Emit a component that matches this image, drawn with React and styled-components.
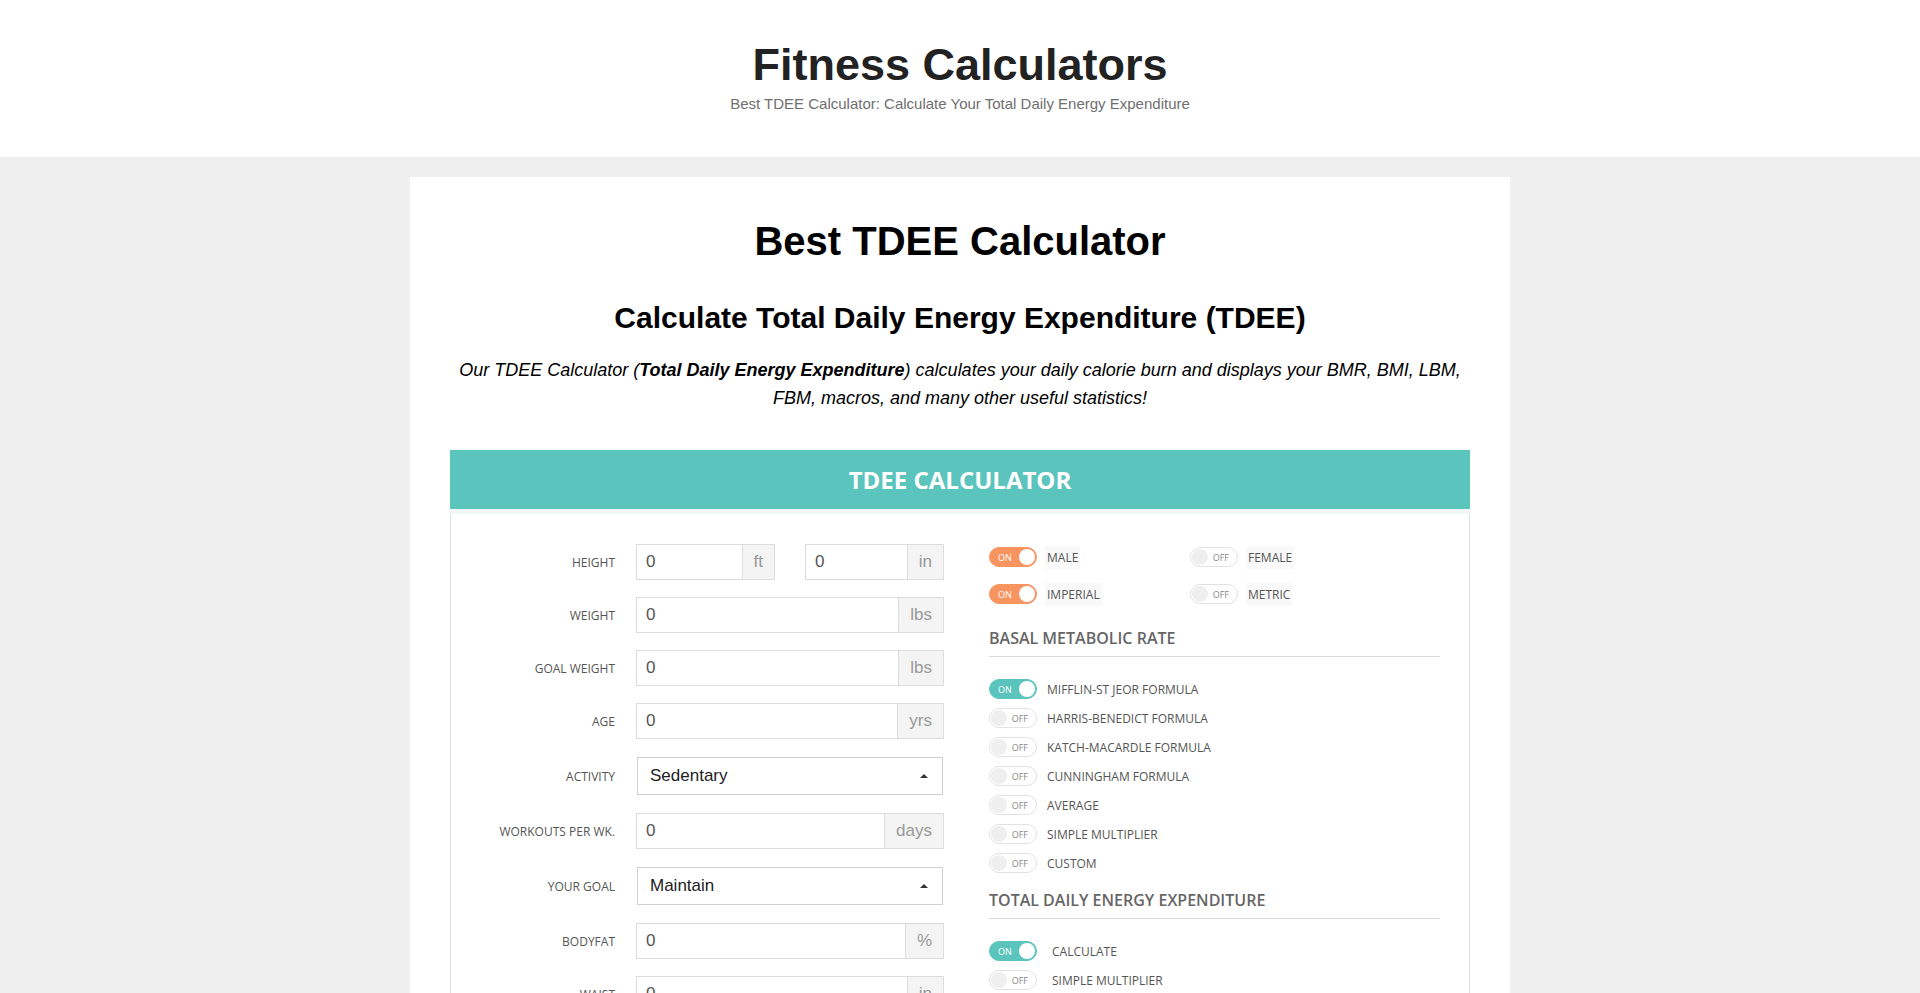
import React from "react"
import styled, { createGlobalStyle } from "styled-components"

const GlobalStyle = createGlobalStyle`
  * { box-sizing: border-box; }
  body {
    margin: 0;
    background: #efefef;
    font-family: "Liberation Sans", Arial, sans-serif;
  }
`

const leftRows = [
  { label: "Height", kind: "split", parts: [{ value: "0", unit: "ft" }, { value: "0", unit: "in" }] },
  { label: "Weight", kind: "input", value: "0", unit: "lbs" },
  { label: "Goal Weight", kind: "input", value: "0", unit: "lbs" },
  { label: "Age", kind: "input", value: "0", unit: "yrs" },
  { label: "Activity", kind: "select", value: "Sedentary" },
  { label: "Workouts per wk.", kind: "input", value: "0", unit: "days" },
  { label: "Your Goal", kind: "select", value: "Maintain" },
  { label: "Bodyfat", kind: "input", value: "0", unit: "%" },
  { label: "Waist", kind: "input", value: "0", unit: "in" },
]

const bmrOptions = [
  { label: "Mifflin-St Jeor Formula", on: true },
  { label: "Harris-Benedict Formula" },
  { label: "Katch-MacArdle Formula" },
  { label: "Cunningham Formula" },
  { label: "Average" },
  { label: "Simple Multiplier" },
  { label: "Custom" },
]

const tdeeOptions = [
  { label: "Calculate", on: true },
  { label: "Simple Multiplier" },
]

function Toggle({ on, color }) {
  return (
    <Switch $on={on} $color={color}>
      <SwitchText $on={on}>{on ? "ON" : "OFF"}</SwitchText>
      <Knob $on={on} />
    </Switch>
  )
}

function InputGroup({ value, unit }) {
  return (
    <Group>
      <Field defaultValue={value} />
      <Addon>{unit}</Addon>
    </Group>
  )
}

function LeftRow({ row }) {
  return (
    <>
      <FieldLabel>{row.label}</FieldLabel>
      {row.kind === "split" && (
        <Split>
          {row.parts.map((p) => (
            <InputGroup key={p.unit} value={p.value} unit={p.unit} />
          ))}
        </Split>
      )}
      {row.kind === "input" && <InputGroup value={row.value} unit={row.unit} />}
      {row.kind === "select" && (
        <SelectBox>
          <span>{row.value}</span>
          <Caret />
        </SelectBox>
      )}
    </>
  )
}

export default function App() {
  return (
    <>
      <GlobalStyle />
      <Header>
        <SiteTitle>Fitness Calculators</SiteTitle>
        <Tagline>Best TDEE Calculator: Calculate Your Total Daily Energy Expenditure</Tagline>
      </Header>
      <Main>
        <Card>
          <PageTitle>Best TDEE Calculator</PageTitle>
          <SubTitle>Calculate Total Daily Energy Expenditure (TDEE)</SubTitle>
          <Intro>
            Our TDEE Calculator (<b>Total Daily Energy Expenditure</b>) calculates your daily
            calorie burn and displays your BMR, BMI, LBM, FBM, macros, and many other useful
            statistics!
          </Intro>

          <Calculator>
            <CalcHeader>TDEE Calculator</CalcHeader>
            <CalcBody>
              <FormGrid>
                {leftRows.map((row) => (
                  <LeftRow key={row.label} row={row} />
                ))}
              </FormGrid>

              <Options>
                <PairGrid>
                  <OptionRow>
                    <Toggle on color="#f8945f" />
                    <ChipLabel>Male</ChipLabel>
                  </OptionRow>
                  <OptionRow>
                    <Toggle />
                    <ChipLabel>Female</ChipLabel>
                  </OptionRow>
                  <OptionRow>
                    <Toggle on color="#f8945f" />
                    <ChipLabel>Imperial</ChipLabel>
                  </OptionRow>
                  <OptionRow>
                    <Toggle />
                    <ChipLabel>Metric</ChipLabel>
                  </OptionRow>
                </PairGrid>

                <SectionTitle $top={23}>Basal Metabolic Rate</SectionTitle>
                <OptionList>
                  {bmrOptions.map((o) => (
                    <OptionRow key={o.label}>
                      <Toggle on={o.on} color="#5bc4bc" />
                      <OptionLabel>{o.label}</OptionLabel>
                    </OptionRow>
                  ))}
                </OptionList>

                <SectionTitle $top={16}>Total Daily Energy Expenditure</SectionTitle>
                <OptionList>
                  {tdeeOptions.map((o) => (
                    <OptionRow key={o.label}>
                      <Toggle on={o.on} color="#5bc4bc" />
                      <OptionLabel $indent>{o.label}</OptionLabel>
                    </OptionRow>
                  ))}
                </OptionList>
              </Options>
            </CalcBody>
          </Calculator>
        </Card>
      </Main>
    </>
  )
}

const Header = styled.header`
  background: #fff;
  padding: 40px 0 44px;
  text-align: center;
`

const SiteTitle = styled.h1`
  margin: 0 0 5px;
  font-size: 45px;
  line-height: 50px;
  font-weight: bold;
  color: #222;
`

const Tagline = styled.div`
  font-size: 15px;
  line-height: 18px;
  color: #6f6f6f;
`

const Main = styled.main`
  padding: 20px 0 40px;
`

const Card = styled.div`
  width: 1100px;
  margin: 0 auto;
  background: #fff;
  padding: 41px 40px 40px;
  text-align: center;
`

const PageTitle = styled.h1`
  margin: 0;
  font-size: 40px;
  line-height: 46px;
  font-weight: bold;
  color: #000;
`

const SubTitle = styled.h2`
  margin: 36px 0 0;
  font-size: 30px;
  line-height: 36px;
  font-weight: bold;
  color: #000;
`

const Intro = styled.p`
  margin: 20px 0 0;
  font-size: 18px;
  line-height: 28px;
  font-style: italic;
  color: #000;
`

const Calculator = styled.section`
  margin-top: 38px;
  border: 1px solid #dedede;
  border-top: none;
  text-align: left;
  padding-bottom: 40px;
`

const CalcHeader = styled.div`
  height: 59px;
  margin: 0 -1px;
  background: #5bc4bc;
  border-bottom: 5px solid #f3f6f6;
  box-sizing: content-box;
  display: flex;
  align-items: center;
  justify-content: center;
  font-family: "Open Sans", sans-serif;
  font-weight: 700;
  font-size: 24px;
  color: #fff;
  text-transform: uppercase;
`

const CalcBody = styled.div`
  display: grid;
  grid-template-columns: 493px 1fr;
  padding-top: 30px;
`

const FormGrid = styled.div`
  display: grid;
  grid-template-columns: 164px 308px;
  column-gap: 21px;
  row-gap: 17px;
  align-items: center;
  align-content: start;
`

const FieldLabel = styled.div`
  text-align: right;
  font-family: "Open Sans", sans-serif;
  font-size: 12px;
  color: #555;
  text-transform: uppercase;
`

const Split = styled.div`
  display: grid;
  grid-template-columns: minmax(0, 1fr) minmax(0, 1fr);
  gap: 30px;
`

const Group = styled.div`
  display: flex;
  min-width: 0;
  height: 36px;
  border: 1px solid #dcdcdc;
  background: #fff;
`

const Field = styled.input`
  flex: 1;
  width: 0;
  min-width: 0;
  border: none;
  outline: none;
  padding: 0 9px;
  font-family: "Liberation Sans", Arial, sans-serif;
  font-size: 17px;
  color: #555;
  background: transparent;
`

const Addon = styled.div`
  display: flex;
  align-items: center;
  padding: 0 11px;
  background: #f4f4f4;
  border-left: 1px solid #dcdcdc;
  font-size: 17px;
  color: #999;
`

const SelectBox = styled.div`
  margin: 1px;
  height: 38px;
  display: flex;
  align-items: center;
  justify-content: space-between;
  padding: 0 12px;
  border: 1px solid #d0d0d0;
  background: #fff;
  font-size: 17px;
  color: #222;
`

const Caret = styled.span`
  width: 0;
  height: 0;
  border-left: 4px solid transparent;
  border-right: 4px solid transparent;
  border-bottom: 4px solid #333;
  margin-right: 2px;
`

const Options = styled.div`
  padding: 3px 29px 0 45px;
`

const PairGrid = styled.div`
  display: grid;
  grid-template-columns: 201px 1fr;
  row-gap: 17px;
`

const OptionRow = styled.div`
  display: flex;
  align-items: center;
  gap: 8px;
  height: 20px;
`

const ChipLabel = styled.span`
  padding: 3px 2px;
  background: #f9f9f9;
  font-family: "Open Sans", sans-serif;
  font-size: 12px;
  color: #555;
  text-transform: uppercase;
`

const OptionLabel = styled.span`
  padding-left: ${(p) => (p.$indent ? "7px" : "2px")};
  font-family: "Open Sans", sans-serif;
  font-size: 12px;
  color: #555;
  text-transform: uppercase;
`

const SectionTitle = styled.h3`
  margin: ${(p) => p.$top}px 0 22px;
  padding-bottom: 7px;
  border-bottom: 1px solid #dadada;
  font-family: "Open Sans", sans-serif;
  font-weight: 600;
  font-size: 16px;
  line-height: 22px;
  color: #666;
  text-transform: uppercase;
`

const OptionList = styled.div`
  display: grid;
  row-gap: 9px;
`

const Switch = styled.span`
  position: relative;
  flex: none;
  width: 48px;
  height: 20px;
  border-radius: 10px;
  display: flex;
  align-items: center;
  justify-content: ${(p) => (p.$on ? "flex-start" : "flex-end")};
  padding: ${(p) => (p.$on ? "0 0 0 8px" : "0 8px 0 0")};
  background: ${(p) => (p.$on ? p.$color : "#fff")};
  border: 1px solid ${(p) => (p.$on ? p.$color : "#e2e2e2")};
`

const SwitchText = styled.span`
  font-family: "Open Sans", sans-serif;
  font-size: 9px;
  color: ${(p) => (p.$on ? "#fff" : "#888")};
`

const Knob = styled.span`
  position: absolute;
  top: 1px;
  ${(p) => (p.$on ? "right: 1px;" : "left: 1px;")}
  width: 16px;
  height: 16px;
  border-radius: 50%;
  background: ${(p) => (p.$on ? "#fff" : "#efefef")};
`
